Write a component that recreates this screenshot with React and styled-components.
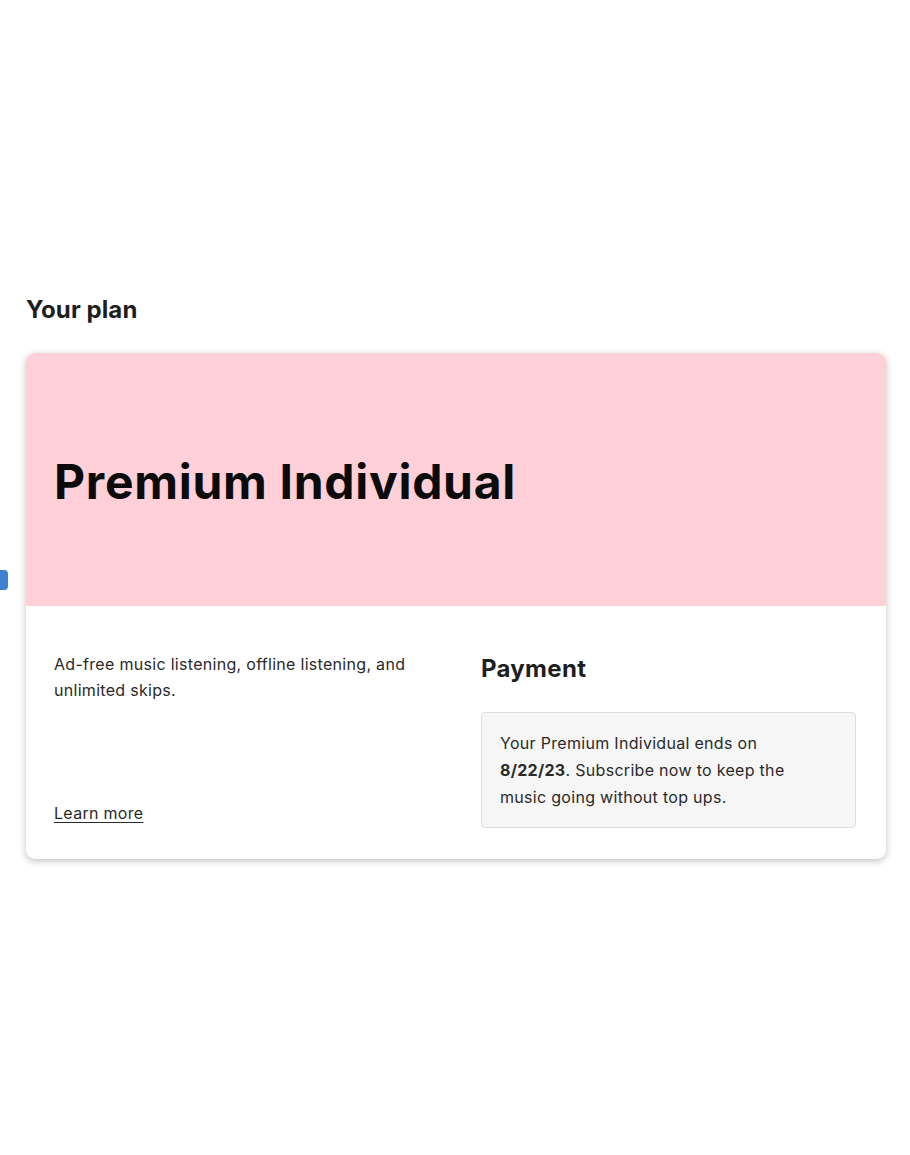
import styled, { createGlobalStyle } from "styled-components";

const Global = createGlobalStyle`
  html, body {
    margin: 0;
    padding: 0;
    background: #ffffff;
    font-family: Inter, "Liberation Sans", sans-serif;
    color: #1f1f1f;
  }
`;

const Page = styled.div`
  position: relative;
  width: 910px;
  height: 1155px;
  box-sizing: border-box;
  padding: 295px 24px 0 26px;
  overflow: hidden;
`;

const SideTab = styled.div`
  position: absolute;
  left: -6px;
  top: 570px;
  width: 14px;
  height: 20px;
  border-radius: 4px;
  background: #3d7fd0;
`;

const SectionTitle = styled.h2`
  margin: 0 0 29px;
  font-size: 24px;
  font-weight: 700;
  letter-spacing: 0.1px;
  color: #1d1f1f;
`;

const Card = styled.div`
  width: 860px;
  border-radius: 9px;
  overflow: hidden;
  background: #ffffff;
  box-shadow: 0 2px 7px rgba(60, 40, 45, 0.3);
`;

const Banner = styled.div`
  height: 253px;
  background: #ffd0d8;
  display: flex;
  align-items: center;
  padding: 0 28px;
  box-sizing: border-box;
`;

const PlanName = styled.h1`
  margin: 4px 0 0;
  font-size: 48px;
  font-weight: 700;
  letter-spacing: 0.7px;
  color: #0b0b0b;
`;

const Body = styled.div`
  display: grid;
  grid-template-columns: 1fr 375px;
  column-gap: 28px;
  padding: 45px 30px 31px 28px;
  box-sizing: border-box;
`;

const Column = styled.div`
  display: flex;
  flex-direction: column;
  justify-content: ${(p) => (p.$spread ? "space-between" : "flex-start")};
  padding-bottom: ${(p) => (p.$spread ? "5px" : "0")};
`;

const Description = styled.p`
  margin: 0;
  font-size: 16px;
  letter-spacing: 0.3px;
  line-height: 26px;
  color: #2a2a2a;
  max-width: 380px;
`;

const LearnMore = styled.a`
  font-size: 16px;
  letter-spacing: 0.3px;
  color: #2a2a2a;
  text-decoration: underline;
  text-underline-offset: 3px;
  line-height: 20px;
  cursor: pointer;
`;

const SubTitle = styled.h3`
  margin: 3px 0 29px;
  font-size: 24px;
  font-weight: 700;
  letter-spacing: 0.3px;
  color: #1d1f1f;
`;

const Notice = styled.div`
  background: #f6f6f6;
  border: 1px solid #dedede;
  border-radius: 4px;
  padding: 17px 48px 16px 18px;
  font-size: 16px;
  letter-spacing: 0.3px;
  line-height: 27px;
  color: #2a2a2a;
`;

export default function App() {
  return (
    <>
      <Global />
      <Page>
        <SideTab />
        <SectionTitle>Your plan</SectionTitle>
        <Card>
          <Banner>
            <PlanName>Premium Individual</PlanName>
          </Banner>
          <Body>
            <Column $spread>
              <Description>
                Ad-free music listening, offline listening, and unlimited skips.
              </Description>
              <LearnMore>Learn more</LearnMore>
            </Column>
            <Column>
              <SubTitle>Payment</SubTitle>
              <Notice>
                Your Premium Individual ends on <strong>8/22/23</strong>.
                Subscribe now to keep the music going without top ups.
              </Notice>
            </Column>
          </Body>
        </Card>
      </Page>
    </>
  );
}
